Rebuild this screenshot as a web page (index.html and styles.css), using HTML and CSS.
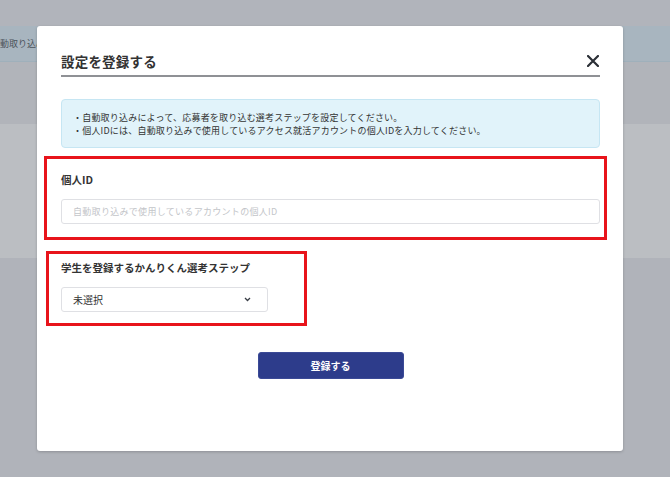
FILE: index.html
```html
<!DOCTYPE html>
<html lang="ja">
<head>
  <meta charset="UTF-8" />
  <meta name="viewport" content="width=device-width, initial-scale=1.0"/>
  <title>設定を登録する</title>
  <link rel="stylesheet" href="styles.css">
</head>
<body>
  <div class="page">
    <div class="page-top"></div>
    <div class="page-bar"><span>動取り込み</span></div>
    <div class="page-gap"></div>
    <div class="page-panel"></div>
  </div>

  <div class="modal">
    <div class="modal-header">
      <div class="modal-title">設定を登録する</div>
      <svg class="close" width="12" height="12" viewBox="0 0 12 12">
        <path d="M1 1 L11 11 M11 1 L1 11" stroke="#2b2f36" stroke-width="2.2" stroke-linecap="round" fill="none"/>
      </svg>
    </div>

    <div class="notice">
      ・自動取り込みによって、応募者を取り込む選考ステップを設定してください。<br>
      ・個人IDには、自動取り込みで使用しているアクセス就活アカウントの個人IDを入力してください。
    </div>

    <div class="field field-id">
      <div class="label">個人ID</div>
      <input type="text" class="input" placeholder="自動取り込みで使用しているアカウントの個人ID">
    </div>

    <div class="field field-step">
      <div class="label">学生を登録するかんりくん選考ステップ</div>
      <div class="select-wrap">
        <select class="select">
          <option>未選択</option>
        </select>
        <svg class="chevron" width="7" height="5" viewBox="0 0 7 5">
          <path d="M1 1 L3.5 3.5 L6 1" stroke="#3a3f47" stroke-width="1.3" fill="none"/>
        </svg>
      </div>
    </div>

    <div class="actions">
      <button>登録する</button>
    </div>
  </div>
</body>
</html>
```

FILE: styles.css
```css
* {
  box-sizing: border-box;
}

body {
  margin: 0;
  font-family: "Noto Sans CJK JP", "Noto Sans", sans-serif;
  background: #b0b3ba;
  color: #333;
  overflow: hidden;
}

/* dimmed page behind the modal */
.page-top {
  height: 26px;
  background: #b1b4bb;
}

.page-bar {
  height: 36px;
  background: #a8b5bf;
  border-bottom: 1px solid #9fb0bb;
  font-size: 9px;
  line-height: 35px;
  color: #4c535b;
  white-space: nowrap;
}

.page-gap {
  height: 62px;
  background: #b1b4ba;
}

.page-panel {
  height: 134px;
  background: #bbbec2;
}

/* modal */
.modal {
  position: absolute;
  left: 37px;
  top: 26px;
  width: 586px;
  height: 425px;
  background: #fff;
  border-radius: 3px;
  box-shadow: 0 1px 3px rgba(0,0,0,0.2);
  padding: 25px 23px 0 24px;
}

.modal-header {
  display: flex;
  justify-content: space-between;
  align-items: center;
  padding-bottom: 4px;
  border-bottom: 2px solid #8f9195;
}

.modal-title {
  font-size: 13.5px;
  font-weight: bold;
  line-height: 20px;
  color: #333;
  letter-spacing: 0.2px;
}

.close {
  margin-right: 1px;
}

.notice {
  margin-top: 22px;
  background: #e1f3fa;
  border: 1px solid #c6e6f3;
  border-radius: 4px;
  padding: 11px 11px 10px;
  font-size: 9px;
  line-height: 13px;
  letter-spacing: 0.2px;
  color: #333;
}

.field {
  border: 3px solid #e8141b;
}

.field-id {
  margin: 8px -7px 0 -17px;
  padding: 14px 4px 13px 14px;
}

.field-step {
  margin: 11px 0 0 -15px;
  width: 261px;
  padding: 7px 12px 11px 12px;
}

.label {
  font-size: 10.5px;
  font-weight: bold;
  line-height: 14px;
  color: #333;
  margin-bottom: 12px;
}

.input {
  display: block;
  width: 100%;
  height: 25px;
  border: 1px solid #dfe0e4;
  border-radius: 3px;
  padding: 0 11px;
  font-family: inherit;
  font-size: 9px;
  letter-spacing: 0.3px;
  color: #333;
  outline: none;
}

.input::placeholder {
  color: #c3c5c9;
}

.select-wrap {
  position: relative;
  width: 207px;
}

.select {
  display: block;
  width: 100%;
  height: 25px;
  appearance: none;
  -webkit-appearance: none;
  background: #fff;
  border: 1px solid #dfe0e4;
  border-radius: 3px;
  padding: 0 11px;
  font-family: inherit;
  font-size: 10px;
  color: #333;
  outline: none;
}

.chevron {
  position: absolute;
  right: 17px;
  top: 10px;
}

.actions {
  display: flex;
  justify-content: center;
  margin-top: 26px;
}

button {
  width: 146px;
  height: 27px;
  background: #2d3c8b;
  color: #fff;
  border: 1px solid #3b4a96;
  border-radius: 3px;
  font-family: inherit;
  font-size: 10px;
  font-weight: bold;
  cursor: pointer;
}
```
